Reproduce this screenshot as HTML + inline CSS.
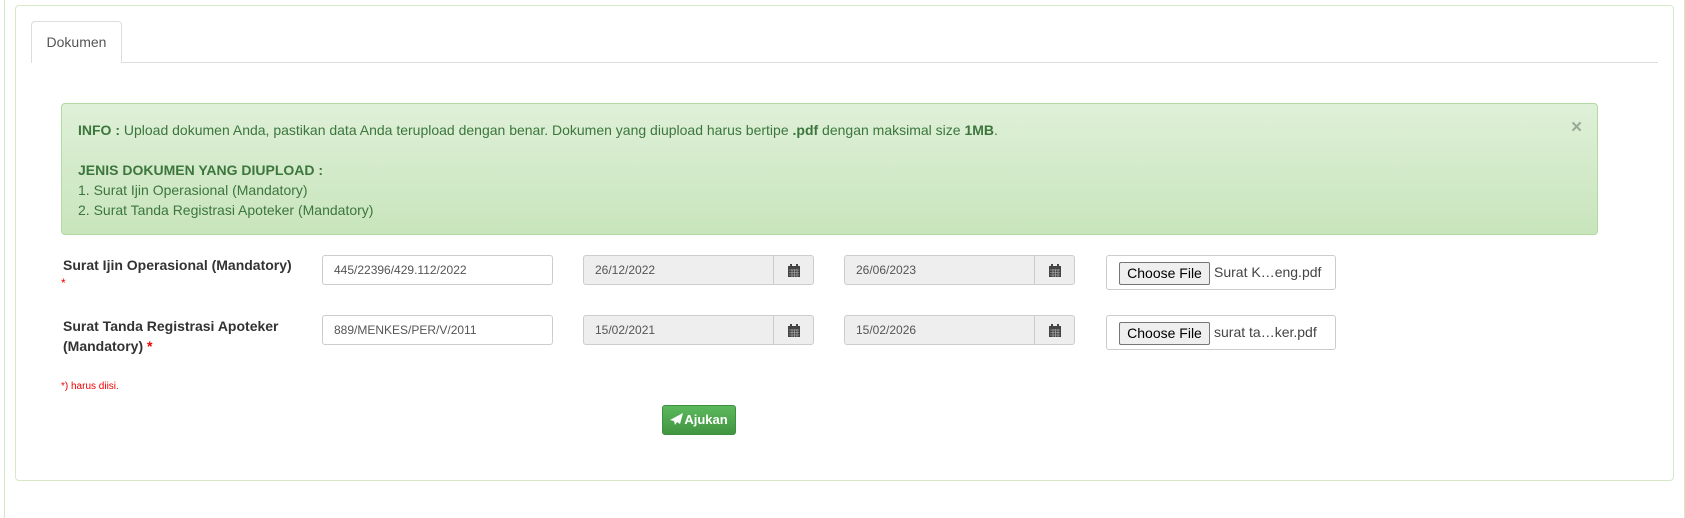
<!DOCTYPE html>
<html><head><meta charset="utf-8"><style>
*{box-sizing:border-box;margin:0;padding:0}
body{width:1685px;height:511px;background:#fff;font-family:"Liberation Sans",Arial,sans-serif;position:relative;overflow:hidden;color:#333}
.a{position:absolute}
.outer{left:4px;top:-2px;width:1681px;height:520px;border-left:1px solid #d6e9c6;border-right:1px solid #d6e9c6}
.panel{left:15px;top:5px;width:1659px;height:476px;border:1px solid #d6e9c6;border-radius:4px;background:#fff}
.tabline{left:31px;top:62px;width:1627px;height:1px;background:#ddd}
.tab{left:31px;top:21px;width:91px;height:42px;border:1px solid #ddd;border-bottom:none;border-radius:4px 4px 0 0;background:#fff;color:#555;font-size:14px;line-height:40px;text-align:center}
.alert{left:61px;top:103px;width:1537px;height:132px;border:1px solid #b2dba1;border-radius:4px;background:linear-gradient(#dff0d8,#c8e5bc);color:#3c763d;font-size:14px;line-height:20px;padding:16px 0 0 16px}
.close{left:1571px;top:117px;color:#9aaa98;font-size:19px;font-weight:bold}
.lbl{font-size:14px;font-weight:bold;color:#333;line-height:20px}
.req{color:#e00}
.inp{height:30px;border:1px solid #ccc;border-radius:3px;background:#fff;font-size:12px;color:#555;padding:0 11px;line-height:28px}
.dt{background:#eee}
.add{position:absolute;right:0;top:0;width:40px;height:28px;border-left:1px solid #ccc;display:flex;align-items:center;justify-content:center}
.file{height:35px;border:1px solid #ccc;border-radius:3px;background:#fff;font-size:14px;color:#555}
.fb{position:absolute;left:12px;top:6px;width:91px;height:23px;border:1px solid #767676;border-radius:2px;background:#efefef;color:#000;font-size:14px;line-height:21px;text-align:center}
.fn{position:absolute;left:107px;top:0;line-height:33px;font-size:14px;color:#444}
.btn{left:662px;top:405px;width:74px;height:30px;border:1px solid #3e8f3e;border-radius:3px;background:linear-gradient(#5cb85c,#419641);color:#fff;font-size:13px;font-weight:bold;line-height:28px;text-align:center}
</style></head><body>
<div class="a outer"></div>
<div class="a panel"></div>
<div class="a tabline"></div>
<div class="a tab">Dokumen</div>
<div class="a alert"><b>INFO :</b> Upload dokumen Anda, pastikan data Anda terupload dengan benar. Dokumen yang diupload harus bertipe <b>.pdf</b> dengan maksimal size <b>1MB</b>.<br><br><b>JENIS DOKUMEN YANG DIUPLOAD :</b><br>1. Surat Ijin Operasional (Mandatory)<br>2. Surat Tanda Registrasi Apoteker (Mandatory)</div>
<div class="a close">×</div>

<div class="a lbl" style="left:63px;top:255px">Surat Ijin Operasional (Mandatory)</div>
<div class="a req" style="left:61px;top:276px;font-size:12px">*</div>
<div class="a lbl" style="left:63px;top:316px">Surat Tanda Registrasi Apoteker<br>(Mandatory) <span class="req">*</span></div>

<div class="a inp" style="left:322px;top:255px;width:231px">445/22396/429.112/2022</div>
<div class="a inp" style="left:322px;top:315px;width:231px">889/MENKES/PER/V/2011</div>

<div class="a inp dt" style="left:583px;top:255px;width:231px">26/12/2022<span class="add"><svg width="12" height="13" viewBox="0 0 12 13"><rect x="0" y="2" width="12" height="11" fill="#444"/><rect x="2" y="0" width="2" height="3" fill="#444"/><rect x="8" y="0" width="2" height="3" fill="#444"/><path d="M1 6h10M1 8.5h10M1 11h10M4 5v8M6.5 5v8M9 5v8" stroke="#bbb" stroke-width=".6"/></svg></span></div>
<div class="a inp dt" style="left:844px;top:255px;width:231px">26/06/2023<span class="add"><svg width="12" height="13" viewBox="0 0 12 13"><rect x="0" y="2" width="12" height="11" fill="#444"/><rect x="2" y="0" width="2" height="3" fill="#444"/><rect x="8" y="0" width="2" height="3" fill="#444"/><path d="M1 6h10M1 8.5h10M1 11h10M4 5v8M6.5 5v8M9 5v8" stroke="#bbb" stroke-width=".6"/></svg></span></div>
<div class="a inp dt" style="left:583px;top:315px;width:231px">15/02/2021<span class="add"><svg width="12" height="13" viewBox="0 0 12 13"><rect x="0" y="2" width="12" height="11" fill="#444"/><rect x="2" y="0" width="2" height="3" fill="#444"/><rect x="8" y="0" width="2" height="3" fill="#444"/><path d="M1 6h10M1 8.5h10M1 11h10M4 5v8M6.5 5v8M9 5v8" stroke="#bbb" stroke-width=".6"/></svg></span></div>
<div class="a inp dt" style="left:844px;top:315px;width:231px">15/02/2026<span class="add"><svg width="12" height="13" viewBox="0 0 12 13"><rect x="0" y="2" width="12" height="11" fill="#444"/><rect x="2" y="0" width="2" height="3" fill="#444"/><rect x="8" y="0" width="2" height="3" fill="#444"/><path d="M1 6h10M1 8.5h10M1 11h10M4 5v8M6.5 5v8M9 5v8" stroke="#bbb" stroke-width=".6"/></svg></span></div>

<div class="a file" style="left:1106px;top:255px;width:230px"><span class="fb">Choose File</span><span class="fn">Surat K…eng.pdf</span></div>
<div class="a file" style="left:1106px;top:315px;width:230px"><span class="fb">Choose File</span><span class="fn">surat ta…ker.pdf</span></div>

<div class="a req" style="left:61px;top:381px;font-size:10px">*) harus diisi.</div>
<div class="a btn"><svg width="13" height="12" viewBox="0 0 13 12" style="vertical-align:-1px;margin-right:1px"><path d="M13 0L0 7l4 1 1 4 2-3 3 2z" fill="#fff"/></svg>Ajukan</div>
</body></html>
